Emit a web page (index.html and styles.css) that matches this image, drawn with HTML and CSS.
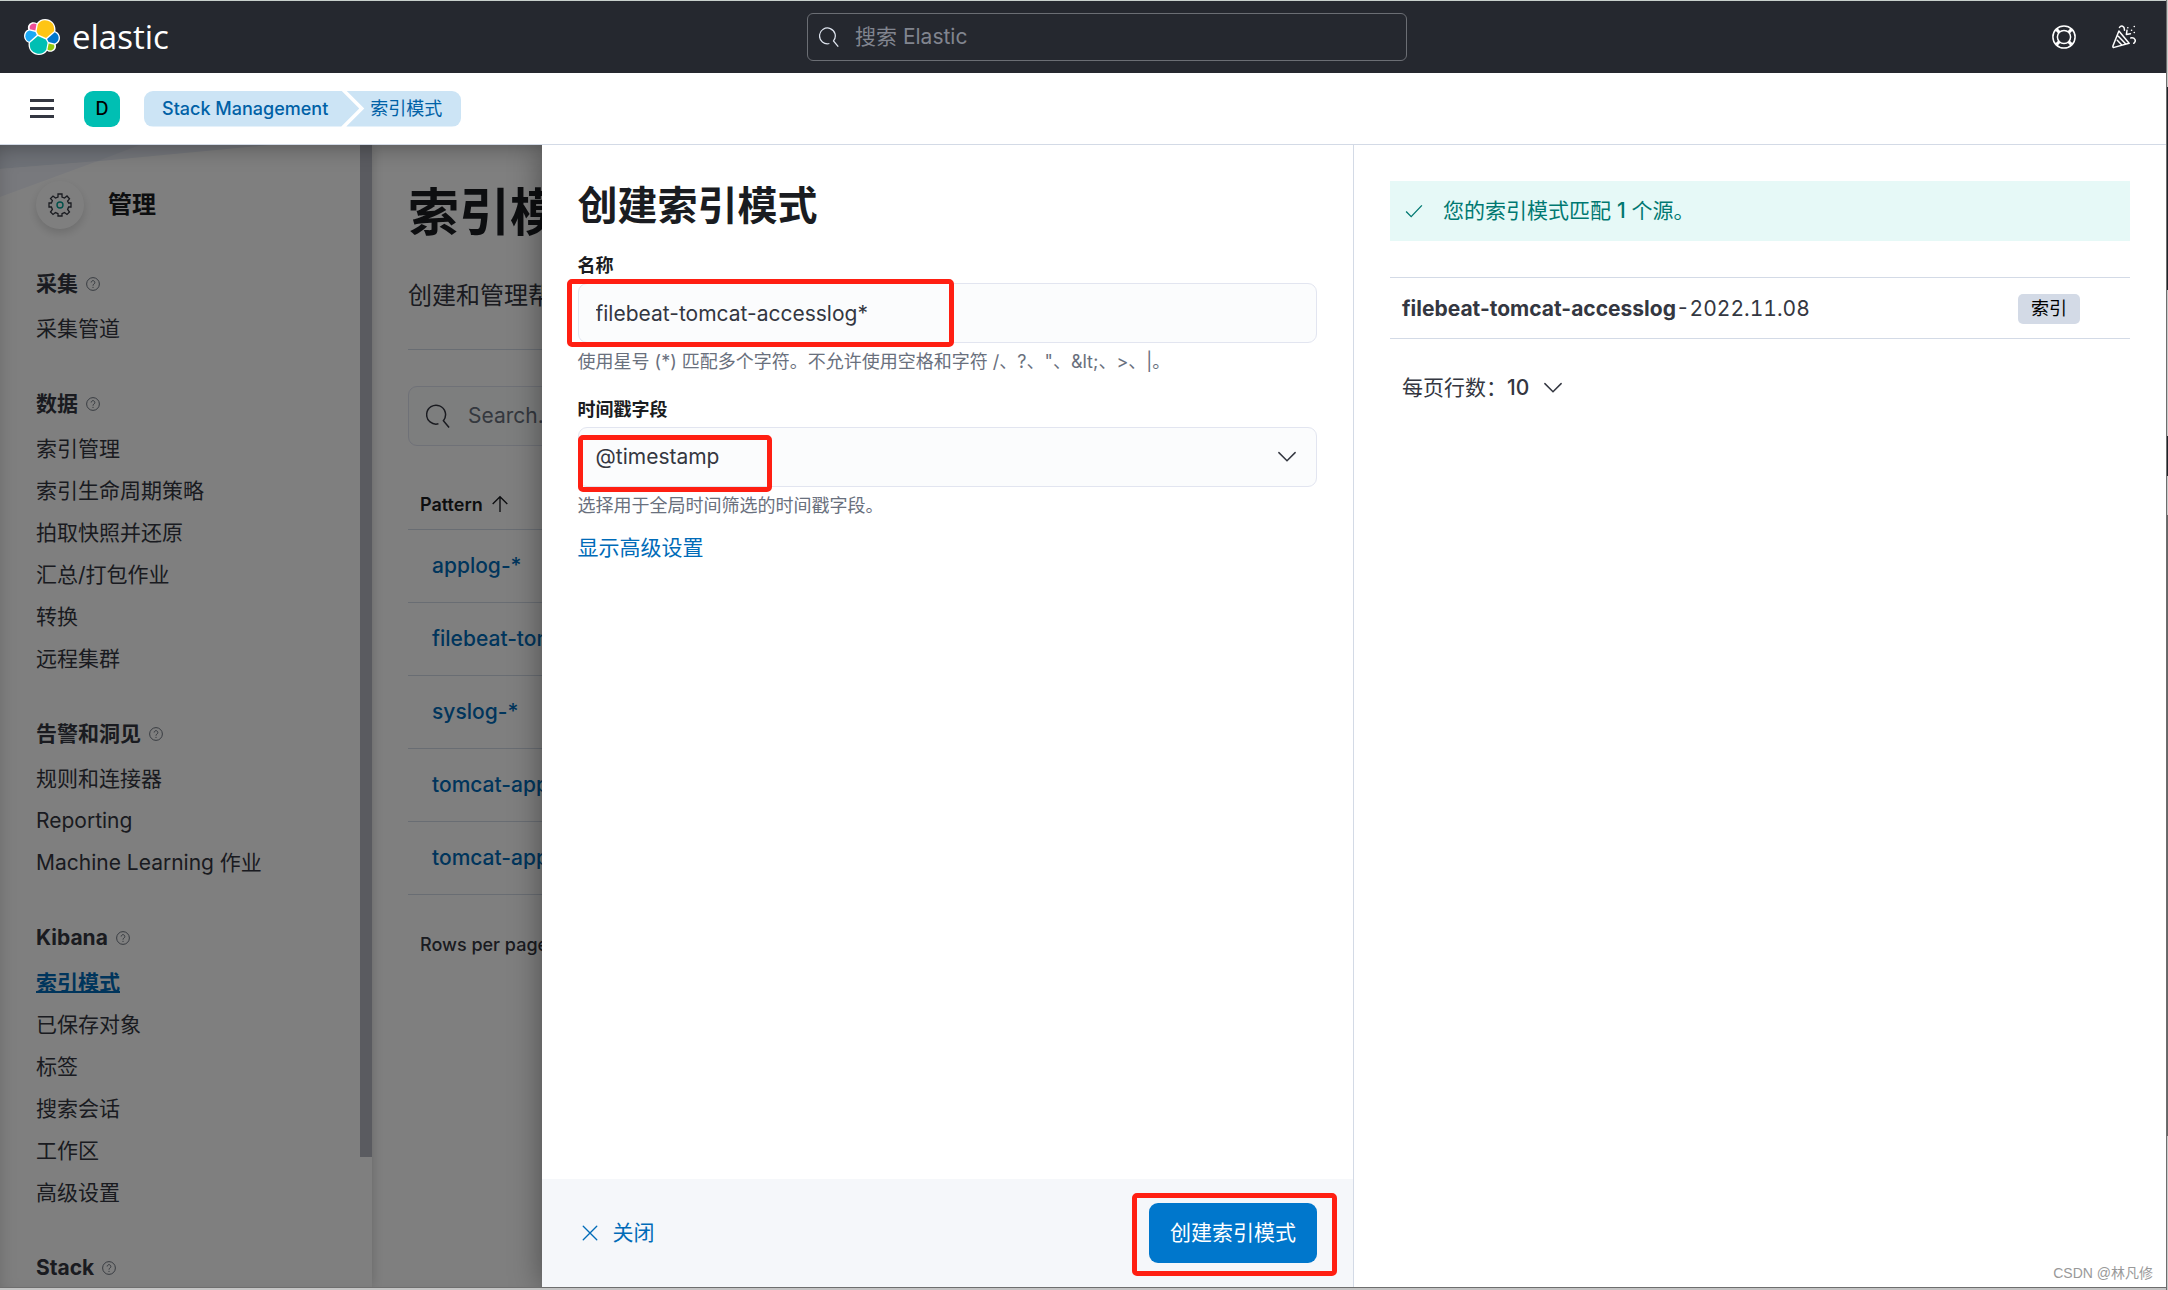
FILE: index.html
```html
<!DOCTYPE html>
<html lang="zh-CN">
<head>
<meta charset="utf-8">
<title>索引模式 - Elastic</title>
<link rel="stylesheet" href="styles.css">
</head>
<body>
<svg class="sprite" aria-hidden="true">
  <symbol id="search" viewBox="0 0 16 16"><path d="M8.300 13.200A6.300 6.300 0 1 1 11.600 11.100L15.400 15.700" fill="none" stroke="currentColor"/></symbol>
  <symbol id="help" viewBox="0 0 16 16"><circle cx="8" cy="8" r="7.300" fill="none" stroke="currentColor" stroke-width="1.100"/><path d="M5.900 6.300a2.100 2.100 0 1 1 3.300 1.700C8.400 8.500 8 8.800 8 9.900M8 11.300v1.300" fill="none" stroke="currentColor" stroke-width="1.100"/></symbol>
  <symbol id="down" viewBox="0 0 16 16"><path d="M1.500 4.500 8 11l6.500-6.500" fill="none" stroke="currentColor" stroke-width="1.200" stroke-linecap="round"/></symbol>
  <symbol id="cross" viewBox="0 0 16 16"><path d="M2 2l12 12M14 2 2 14" fill="none" stroke="currentColor" stroke-width="1.200" stroke-linecap="round"/></symbol>
</svg>

<div class="app">
  <header class="topbar">
    <a class="brand" href="#" aria-label="Elastic">
      <svg class="logo" viewBox="0 0 32 32" aria-hidden="true">
        <path fill="#FFF" d="M32 16.770c0-2.680-1.660-5.030-4.170-5.950A8.300 8.300 0 0 0 28 9.180C28 4.150 23.930 0 18.800 0a9.200 9.200 0 0 0-7.460 3.810A4.800 4.800 0 0 0 8.350 2.780c-2.700 0-4.900 2.200-4.900 4.900 0 .59.110 1.160.3 1.690C1.370 10.230 0 12.700 0 15.220c0 2.690 1.670 5.050 4.190 5.970-.110.540-.170 1.100-.170 1.670C4.020 27.900 8.100 32 13.150 32a9.100 9.100 0 0 0 7.420-3.840c.86.680 1.910 1.050 3.020 1.050 2.700 0 4.900-2.200 4.900-4.900 0-.59-.11-1.160-.31-1.690A6.400 6.400 0 0 0 32 16.770"/>
        <path fill="#FEC514" d="m12.580 13.790 7 3.200 7.070-6.200c.1-.510.150-1.020.150-1.570a7.900 7.900 0 0 0-14.440-4.470L11.180 10.860z"/>
        <path fill="#00BFB3" d="M5.330 21.210c-.1.510-.160 1.050-.160 1.590a7.980 7.980 0 0 0 14.590 4.450l1.170-6.070-1.560-2.980-7.030-3.200z"/>
        <path fill="#F04E98" d="m5.290 9.090 4.790 1.130 1.050-5.450a3.780 3.780 0 0 0-5.840 4.320"/>
        <path fill="#1BA9F5" d="M4.870 10.230A5.340 5.340 0 0 0 1.200 15.250c0 2.210 1.370 4.180 3.420 4.960l6.730-6.080-1.240-2.640z"/>
        <path fill="#93C90E" d="M20.870 27.190a3.770 3.770 0 0 0 5.840-4.310l-4.790-1.120z"/>
        <path fill="#07C" d="m21.850 20.500 5.280 1.230a5.340 5.340 0 0 0 3.670-5.010c0-2.200-1.370-4.170-3.420-4.950l-6.900 6.050z"/>
      </svg>
      <span class="wordmark">elastic</span>
    </a>
    <div class="global-search">
      <svg class="search-icon"><use href="#search"/></svg>
      <input type="search" placeholder="搜索 Elastic" aria-label="搜索 Elastic">
    </div>
    <div class="top-actions">
      <button type="button" aria-label="帮助"><svg viewBox="0 0 16 16" fill="none" stroke="currentColor"><circle cx="8" cy="8" r="7.400"/><circle cx="8" cy="8" r="4.400"/><path stroke-width="2" d="m2.900 2.900 2 2M13.100 2.900l-2 2M2.900 13.100l2-2M13.100 13.100l-2-2"/></svg></button>
      <button type="button" aria-label="新增功能"><svg viewBox="0 0 16 16" fill="none" stroke="currentColor" stroke-linecap="round" stroke-linejoin="round"><path d="M4.600 4 .6 14c-.1.700.2 1 .8.900l10-2.700zM3.500 10.200l3.200 3.300M4.200 7.500l5 5.200M5 1.600C6 .200 8.500.400 8.300 3.500M12.500 8.600c2.900-.5 3.900 2.200 2 3.600M9.600 6.300l2.700-.5M9.600 6.300l.4-2.800M10.500 1.800h.1M13 3.500h.1M14.800 1h.1M14.800 5h.1"/></svg></button>
    </div>
  </header>

  <div class="subbar">
    <button type="button" class="menu" aria-label="菜单"><i></i><i></i><i></i></button>
    <button type="button" class="space" aria-label="空间 D">D</button>
    <nav class="crumbs" aria-label="面包屑">
      <a class="crumb first" href="#">Stack Management</a>
      <a class="crumb last" href="#">索引模式</a>
    </nav>
  </div>

  <div class="workspace">
    <aside class="sidebar">
      <svg class="sweep" viewBox="0 0 360 52" preserveAspectRatio="none" aria-hidden="true"><path d="M0 0h270L90 17 0 23z" fill="#e9edf6"/><path d="M0 24 98 16 0 52z" fill="#f1f3fb"/><path d="M0 0h140L98 16 0 24z" fill="#dfe5f0"/></svg>
      <div class="side-title">
        <span class="gear"><svg viewBox="0 0 24 24" fill="none"><path stroke="#343741" stroke-width="1.300" d="M10 1h4v3l2.500 1L19 3l2.500 2.800L19.600 8l1 2H23v4h-2.400l-1 2.500L21.500 19 19 21.500 16.500 19.600l-2.500 1V23h-4v-2.400l-2.500-1L5 21.500 2.500 19l1.900-2.500-1-2.500H1v-4h2.400l1-2.300L2.500 5.500 5 3l2.500 2L10 4z"/><circle cx="12" cy="12" r="3" stroke="#00a094" stroke-width="1.400"/></svg></span>
        <h2>管理</h2>
      </div>
      <nav class="side-nav" aria-label="管理">
        <section><h3>采集 <svg><use href="#help"/></svg></h3><a href="#">采集管道</a></section>
        <section><h3>数据 <svg><use href="#help"/></svg></h3><a href="#">索引管理</a><a href="#">索引生命周期策略</a><a href="#">拍取快照并还原</a><a href="#">汇总/打包作业</a><a href="#">转换</a><a href="#">远程集群</a></section>
        <section><h3>告警和洞见 <svg><use href="#help"/></svg></h3><a href="#">规则和连接器</a><a href="#">Reporting</a><a href="#">Machine Learning 作业</a></section>
        <section><h3>Kibana <svg><use href="#help"/></svg></h3><a class="current" href="#">索引模式</a><a href="#">已保存对象</a><a href="#">标签</a><a href="#">搜索会话</a><a href="#">工作区</a><a href="#">高级设置</a></section>
        <section><h3>Stack <svg><use href="#help"/></svg></h3></section>
      </nav>
      <div class="scrollbar"></div>
    </aside>

    <main class="patterns">
      <h1>索引模式</h1>
      <p class="intro">创建和管理帮助</p>
      <hr>
      <div class="table-search"><svg><use href="#search"/></svg><input type="search" placeholder="Search..." aria-label="Search"></div>
      <table class="pattern-table">
        <thead><tr><th>Pattern <svg viewBox="0 0 16 16" fill="none" stroke="currentColor" stroke-width="1.200"><path d="M8 15V1.500M1.500 8 8 1.500 14.500 8"/></svg></th></tr></thead>
        <tbody>
          <tr><td><a href="#">applog-*</a></td></tr>
          <tr><td><a href="#">filebeat-tomcat-*</a></td></tr>
          <tr><td><a href="#">syslog-*</a></td></tr>
          <tr><td><a href="#">tomcat-applog-*</a></td></tr>
          <tr><td><a href="#">tomcat-applog*</a></td></tr>
        </tbody>
      </table>
      <button type="button" class="rows">Rows per page: 10</button>
    </main>

    <div class="mask"></div>

    <section class="flyout" role="dialog" aria-labelledby="flyout-title">
      <form class="editor">
        <div class="editor-body">
          <h2 id="flyout-title">创建索引模式</h2>
          <div class="field">
            <label for="name">名称</label>
            <div class="control"><input id="name" type="text" value="filebeat-tomcat-accesslog*"><span class="mark mark-name"></span></div>
            <p>使用星号 (*) 匹配多个字符。不允许使用空格和字符 /、?、"、&amp;lt;、&gt;、|。</p>
          </div>
          <div class="field">
            <label for="time">时间戳字段</label>
            <div class="control"><select id="time"><option>@timestamp</option></select><svg class="caret"><use href="#down"/></svg><span class="mark mark-time"></span></div>
            <p>选择用于全局时间筛选的时间戳字段。</p>
          </div>
          <button type="button" class="link">显示高级设置</button>
        </div>
        <footer class="editor-foot">
          <button type="button" class="close"><svg><use href="#cross"/></svg>关闭</button>
          <div class="control"><button type="button" class="primary">创建索引模式</button><span class="mark mark-create"></span></div>
        </footer>
      </form>
      <aside class="preview">
        <p class="callout"><svg viewBox="0 0 16 16" fill="none" stroke="currentColor" stroke-width="1.200"><path d="m1 8.500 4.500 4.500L15 3"/></svg><span>您的索引模式匹配 <b>1</b> 个源。</span></p>
        <table class="matches"><tbody><tr><td><strong>filebeat-tomcat-accesslog</strong><span class="date">-2022.11.08</span></td><td class="kind"><span>索引</span></td></tr></tbody></table>
        <button type="button" class="page-size"><span>每页行数：<b>10</b></span><svg><use href="#down"/></svg></button>
      </aside>
    </section>
  </div>
  <div class="watermark">CSDN @林凡修</div>
</div>
<div class="edge"></div>
</body>
</html>
```

FILE: styles.css
```css
* { box-sizing: border-box; }
html, body { height: 100%; }
body {
  display: grid;
  grid-template-columns: 1fr 2px;
  margin: 0;
  overflow: hidden;
  background: #c4c4c4;
  color: #343741;
  font: 21px/30px Inter, "Noto Sans CJK SC", sans-serif;
}
h1, h2, h3, p { margin: 0; }
a { color: inherit; text-decoration: none; }
button, input, select { margin: 0; padding: 0; border: 0; background: none; color: inherit; font: inherit; }
button { cursor: pointer; }
svg { display: block; flex: none; }
.sprite { position: absolute; width: 0; height: 0; }

.app {
  position: relative;
  display: flex;
  flex-direction: column;
  min-width: 0;
  height: calc(100vh - 2px);
  border-top: 1px solid #c8d0cc;
  border-bottom: 1px solid #6e6e6e;
  background: #fff;
}

.topbar {
  display: grid;
  grid-template-columns: 783px 600px 1fr;
  align-items: center;
  height: 72px;
  padding: 0 30px 0 24px;
  background: #25282f;
  color: #fff;
}
.brand { display: flex; align-items: center; gap: 12px; }
.logo { width: 36px; height: 36px; }
.wordmark { font: 400 33px/36px "Open Sans", sans-serif; }
.global-search {
  display: flex;
  align-items: center;
  gap: 16px;
  height: 48px;
  padding: 0 12px 0 11px;
  border: 1px solid #6b6e74;
  border-radius: 6px;
}
.search-icon { width: 20px; height: 20px; color: #dfe5ef; }
.global-search input { flex: 1; min-width: 0; outline: 0; }
.global-search input::placeholder { color: #81858f; opacity: 1; }
.top-actions { display: flex; justify-content: flex-end; gap: 36px; }
.top-actions svg { width: 24px; height: 24px; }

.subbar {
  display: flex;
  align-items: center;
  height: 72px;
  padding: 0 30px;
  border-bottom: 1px solid #d3dae6;
}
.menu { display: grid; gap: 5px; width: 24px; }
.menu i { height: 3px; background: #343741; }
.space {
  width: 36px;
  height: 36px;
  margin: 0 24px 0 30px;
  border-radius: 9px;
  background: #00bfb3;
  color: #000;
  font-size: 18px;
  font-weight: 500;
}
.crumbs { display: flex; color: #0061a6; font-size: 18px; line-height: 36px; }
.crumb { background: #cce4f5; }
.first {
  padding: 0 31px 0 18px;
  border-radius: 9px 0 0 9px;
  font-weight: 500;
  clip-path: polygon(0 0, calc(100% - 18px) 0, 100% 50%, calc(100% - 18px) 100%, 0 100%);
}
.last {
  margin-left: -13px;
  padding: 0 19px 0 24px;
  border-radius: 0 9px 9px 0;
  clip-path: polygon(0 0, 100% 0, 100% 100%, 0 100%, 18px 50%);
}

.workspace { position: relative; display: flex; flex: 1; min-height: 0; overflow: hidden; }
.sidebar {
  position: relative;
  width: 372px;
  flex: none;
  padding: 36px 36px 0;
  overflow: hidden;
  box-shadow: 0 0 12px rgba(0, 0, 0, .2);
}
.sweep { position: absolute; top: 0; left: 0; width: 360px; height: 52px; }
.side-title { position: relative; display: flex; align-items: center; gap: 24px; }
.side-title h2 { color: #1a1c21; font-size: 24px; font-weight: 700; }
.gear {
  display: grid;
  place-items: center;
  width: 48px;
  height: 48px;
  border-radius: 50%;
  background: #fff;
  box-shadow: 0 4px 10px rgba(0, 0, 0, .15);
}
.gear svg { width: 24px; height: 24px; }
.side-nav { display: grid; gap: 33px; padding-top: 34px; line-height: 42px; white-space: nowrap; }
.side-nav section { display: grid; justify-items: start; }
.side-nav h3 { display: flex; align-items: center; gap: 8px; padding-bottom: 3px; font-size: 21px; font-weight: 700; }
.side-nav h3 svg { width: 14px; height: 14px; color: #69707d; }
.side-nav .current { color: #006bb8; font-weight: 700; text-decoration: underline; text-decoration-thickness: 2px; }
.scrollbar { position: absolute; top: 0; right: 0; bottom: 130px; width: 12px; background: #b4b7c1; }

.patterns { flex: 1; min-width: 0; margin-right: 75%; padding: 36px 0 0 36px; overflow: hidden; white-space: nowrap; }
.patterns h1 { color: #1a1c21; font-size: 51px; line-height: 64px; font-weight: 700; }
.intro { padding-top: 33px; font-size: 24px; line-height: 36px; }
.patterns hr { width: 600px; height: 1px; margin: 35px 0 36px; border: 0; background: #d3dae6; }
.table-search {
  display: flex;
  align-items: center;
  gap: 18px;
  width: 600px;
  height: 60px;
  padding: 0 17px;
  border: 1px solid #dfe2ef;
  border-radius: 9px;
  background: #fbfcfd;
}
.table-search svg { width: 24px; height: 24px; }
.table-search input { flex: 1; }
.table-search input::placeholder { color: #69707d; opacity: 1; }
.pattern-table { width: 600px; margin-top: 35px; border-collapse: collapse; }
.pattern-table th { height: 48px; padding: 0 12px; color: #1a1c21; font-size: 18px; font-weight: 600; text-align: left; }
.pattern-table th svg { display: inline-block; width: 18px; height: 18px; margin-left: 4px; vertical-align: -2px; }
.pattern-table tr { border-bottom: 1px solid #d3dae6; }
.pattern-table td { height: 73px; padding: 0 24px; color: #006bb8; font-weight: 500; }
.rows { margin: 35px 12px; font-size: 18px; font-weight: 500; }

.mask { position: absolute; inset: 0; background: rgba(0, 0, 0, .5); box-shadow: inset 0 10px 24px -10px rgba(0, 0, 0, .4); }
.flyout {
  position: absolute;
  top: 0;
  right: 0;
  bottom: 0;
  display: flex;
  width: 75%;
  background: #fff;
  box-shadow: 0 0 30px rgba(0, 0, 0, .4);
}
.editor { display: flex; flex-direction: column; flex: 1; min-width: 0; border-right: 1px solid #d3dae6; }
.editor-body { flex: 1; padding: 36px; }
.editor h2 { margin-bottom: 20px; color: #1a1c21; font-size: 40px; line-height: 50px; font-weight: 700; }
.field { margin-bottom: 18px; font-size: 18px; }
.field + .field { margin-bottom: 12px; }
.field label { display: block; height: 32px; color: #1a1c21; font-weight: 700; line-height: 30px; }
.field p { padding-top: 4px; color: #69707d; }
.control { position: relative; }
.field input, .field select {
  display: block;
  width: 100%;
  height: 60px;
  padding: 0 17px;
  border: 1px solid #e2e5f0;
  border-radius: 9px;
  outline: 0;
  background: #fbfcfd;
  font-size: 21px;
  appearance: none;
}
.caret { position: absolute; top: 20px; right: 20px; width: 20px; height: 20px; pointer-events: none; }
.mark { position: absolute; border: 5px solid #ff1f12; border-radius: 5px; pointer-events: none; }
.mark-name { top: -4px; left: -11px; width: 387px; height: 68px; }
.mark-time { top: 8px; left: 0; width: 194px; height: 57px; }
.mark-create { top: -10px; right: -20px; bottom: -13px; left: -17px; }
.link { display: block; color: #006bb8; }
.editor-foot { display: flex; align-items: center; justify-content: space-between; height: 108px; padding: 0 36px; background: #f5f7fa; }
.close { display: flex; align-items: center; gap: 14px; padding-left: 3px; color: #006bb8; }
.close svg { width: 18px; height: 18px; }
.primary { height: 60px; padding: 0 21px; border-radius: 9px; background: #07c; color: #fff; }

.preview { width: 812px; flex: none; padding: 36px; }
.callout { display: flex; align-items: center; gap: 20px; height: 60px; padding: 0 15px; background: #e6f9f7; color: #007871; }
.callout svg { width: 18px; height: 18px; }
.callout b, .page-size b { font-weight: 500; }
.matches { width: 100%; margin-top: 36px; border-collapse: collapse; }
.matches tr { border: solid #d3dae6; border-width: 1px 0; }
.matches td { height: 61px; padding: 2px 12px 0; }
.matches strong { font-weight: 700; }
.date { font-variant-numeric: tabular-nums; }
.matches .kind { width: 124px; }
.kind span { display: block; width: 62px; border-radius: 5px; background: #d3dae6; color: #000; font-size: 18px; text-align: center; }
.page-size { display: flex; align-items: center; gap: 14px; margin: 34px 12px; }
.page-size svg { width: 20px; height: 20px; }

.edge {
  border-left: 1px solid #6e6e6e;
  background: linear-gradient(#c8c8c8 87px, #1f2329 87px 290px, #c8c8c8 290px 436px, #1f2329 436px 476px, #c8c8c8 476px 515px, #666 515px 1136px, #c8c8c8 1136px);
}
.watermark { position: absolute; right: 13px; bottom: 2px; color: #999; font: 14px/24px "Liberation Sans", "Noto Sans CJK SC", sans-serif; }
```
